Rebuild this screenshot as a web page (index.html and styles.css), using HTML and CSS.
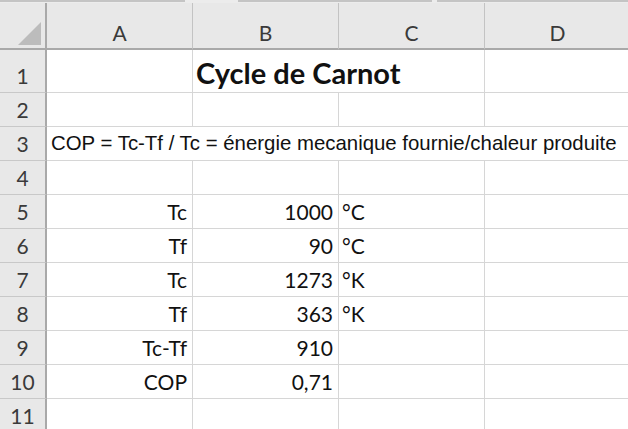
FILE: index.html
```html
<!DOCTYPE html>
<html lang="fr">
<head>
  <meta charset="UTF-8">
  <title>Cycle de Carnot</title>
  <link rel="stylesheet" href="styles.css">
</head>
<body>

  <!-- strip of the toolbar above the sheet -->
  <div class="topbar">
    <div class="seg seg1"></div>
    <div class="seg seg2"></div>
    <div class="seg seg3"></div>
  </div>

  <div class="sheet">
    <!-- column headings -->
    <div class="corner">
      <svg width="23" height="23" viewBox="0 0 23 23"><polygon points="23,0 23,23 0,23" fill="#bcbcbc"/></svg>
    </div>
    <div class="colhead">A</div>
    <div class="colhead">B</div>
    <div class="colhead">C</div>
    <div class="colhead">D</div>

    <!-- row 1 -->
    <div class="rowhead">1</div>
    <div class="cell"></div>
    <div class="cell span2 title">Cycle de Carnot</div>
    <div class="cell"></div>

    <!-- row 2 -->
    <div class="rowhead">2</div>
    <div class="cell"></div>
    <div class="cell"></div>
    <div class="cell"></div>
    <div class="cell"></div>

    <!-- row 3 -->
    <div class="rowhead">3</div>
    <div class="cell span4 formula">COP = Tc-Tf / Tc = énergie mecanique fournie/chaleur produite</div>

    <!-- row 4 -->
    <div class="rowhead">4</div>
    <div class="cell"></div>
    <div class="cell"></div>
    <div class="cell"></div>
    <div class="cell"></div>

    <!-- row 5 -->
    <div class="rowhead">5</div>
    <div class="cell right">Tc</div>
    <div class="cell right">1000</div>
    <div class="cell">°C</div>
    <div class="cell"></div>

    <!-- row 6 -->
    <div class="rowhead">6</div>
    <div class="cell right">Tf</div>
    <div class="cell right">90</div>
    <div class="cell">°C</div>
    <div class="cell"></div>

    <!-- row 7 -->
    <div class="rowhead">7</div>
    <div class="cell right">Tc</div>
    <div class="cell right">1273</div>
    <div class="cell">°K</div>
    <div class="cell"></div>

    <!-- row 8 -->
    <div class="rowhead">8</div>
    <div class="cell right">Tf</div>
    <div class="cell right">363</div>
    <div class="cell">°K</div>
    <div class="cell"></div>

    <!-- row 9 -->
    <div class="rowhead">9</div>
    <div class="cell right">Tc-Tf</div>
    <div class="cell right">910</div>
    <div class="cell"></div>
    <div class="cell"></div>

    <!-- row 10 -->
    <div class="rowhead">10</div>
    <div class="cell right">COP</div>
    <div class="cell right">0,71</div>
    <div class="cell"></div>
    <div class="cell"></div>

    <!-- row 11 -->
    <div class="rowhead">11</div>
    <div class="cell"></div>
    <div class="cell"></div>
    <div class="cell"></div>
    <div class="cell"></div>
  </div>

</body>
</html>
```

FILE: styles.css
```css
body {
  margin: 0;
  background: #ffffff;
  font-family: Lato, "Noto Sans", sans-serif;
  overflow: hidden;
}

.topbar {
  display: flex;
  height: 3px;
  background: #ececec;
}

.seg {
  height: 2px;
  background: #c4c4c4;
}

.seg1 { width: 185px; }
.seg2 { width: 194px; margin-left: 53px; }
.seg3 { flex: 1; margin-left: 5px; }

.sheet {
  display: grid;
  grid-template-columns: 47px 146px 146px 146px 146px;
  grid-template-rows: 47px 43px repeat(10, 34px);
}

.corner {
  background: #e8e8e8;
  border-right: 2px solid #a9a9a9;
  border-bottom: 2px solid #a9a9a9;
  display: flex;
  align-items: flex-end;
  justify-content: flex-end;
  padding: 0 4px 3px 0;
}

.corner svg {
  display: block;
}

.colhead {
  background: #e8e8e8;
  border-right: 1px solid #c3c3c3;
  border-bottom: 2px solid #a9a9a9;
  display: flex;
  align-items: flex-end;
  justify-content: center;
  padding-bottom: 3px;
  font-size: 21px;
  color: #3a3a3a;
}

.rowhead {
  background: #e8e8e8;
  border-right: 2px solid #a9a9a9;
  border-bottom: 1px solid #c8c8c8;
  display: flex;
  align-items: flex-end;
  justify-content: center;
  padding-bottom: 4px;
  font-size: 21px;
  color: #3a3a3a;
}

.cell {
  border-right: 1px solid #d6d6d6;
  border-bottom: 1px solid #d6d6d6;
  display: flex;
  align-items: flex-end;
  padding: 0 3px 4px 3px;
  font-size: 21px;
  color: #111111;
  white-space: nowrap;
  min-width: 0;
}

.right {
  justify-content: flex-end;
  padding-right: 5px;
}

.span2 {
  grid-column: span 2;
}

.span4 {
  grid-column: span 4;
  border-right: none;
}

.title {
  font-weight: bold;
  font-size: 29px;
  padding-bottom: 2px;
}

.formula {
  font-family: "Liberation Sans", Arial, sans-serif;
  font-size: 20.4px;
  padding-left: 4px;
  padding-bottom: 5px;
}
```
